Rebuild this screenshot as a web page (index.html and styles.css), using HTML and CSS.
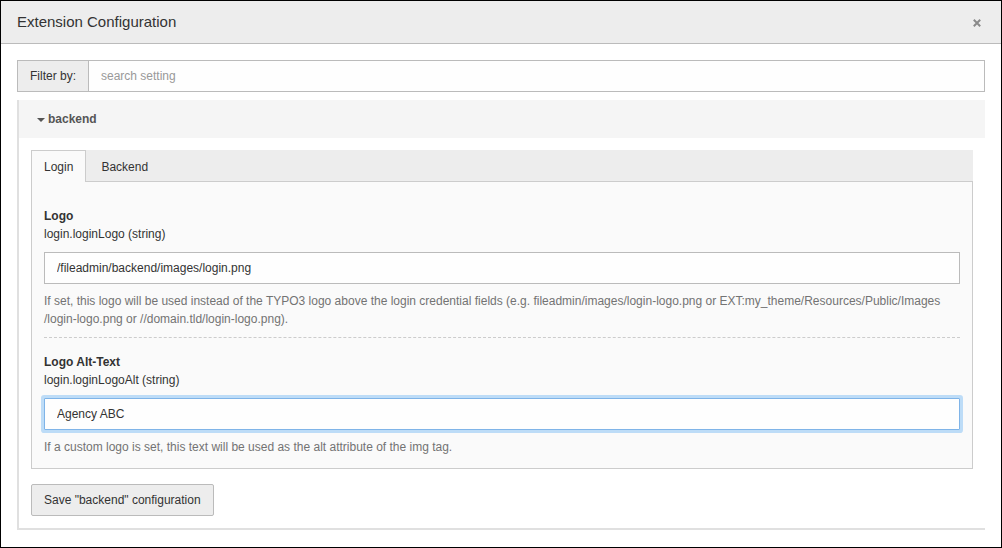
FILE: index.html
```html
<!DOCTYPE html>
<html>
<head>
<meta charset="utf-8">
<link rel="stylesheet" href="styles.css">
</head>
<body>
<div class="modal">
  <div class="modal-header">
    <h4 class="modal-title">Extension Configuration</h4>
    <span class="close" title="Close"><svg width="8" height="8" viewBox="0 0 8 8"><path d="M0.8 0.8 L7.2 7.2 M7.2 0.8 L0.8 7.2" stroke="#8a8a8a" stroke-width="2" fill="none"/></svg></span>
  </div>
  <div class="modal-body">
    <div class="filter-group">
      <span class="addon">Filter by:</span>
      <input class="filter-input" type="text" placeholder="search setting">
    </div>
    <div class="panel">
      <div class="panel-heading"><span class="caret"></span>backend</div>
      <div class="panel-body">
        <ul class="tabs">
          <li class="tab active">Login</li>
          <li class="tab">Backend</li>
        </ul>
        <div class="tab-content">
          <div class="field first">
            <div class="label">Logo</div>
            <div class="key">login.loginLogo (string)</div>
            <input class="text-input" type="text" value="/fileadmin/backend/images/login.png">
            <div class="help">If set, this logo will be used instead of the TYPO3 logo above the login credential fields (e.g. fileadmin/images/login-logo.png or EXT:my_theme/Resources/Public/Images /login-logo.png or //domain.tld/login-logo.png).</div>
          </div>
          <div class="field last">
            <div class="label">Logo Alt-Text</div>
            <div class="key">login.loginLogoAlt (string)</div>
            <input class="text-input focus" type="text" value="Agency ABC">
            <div class="help">If a custom logo is set, this text will be used as the alt attribute of the img tag.</div>
          </div>
        </div>
        <button class="btn">Save "backend" configuration</button>
      </div>
    </div>
  </div>
</div>
</body>
</html>
```

FILE: styles.css
```css
* { box-sizing: border-box; }
html, body { margin: 0; padding: 0; }
body {
  font-family: "Liberation Sans", Arial, sans-serif;
  font-size: 12px;
  color: #333;
  background: #fff;
}
.modal {
  width: 1002px;
  height: 548px;
  border: 1px solid #000;
  background: #fff;
  overflow: hidden;
}
.modal-header {
  height: 43px;
  background: #ededed;
  border-bottom: 1px solid #bbb;
  display: flex;
  align-items: center;
  justify-content: space-between;
  padding: 0 16px;
}
.modal-title {
  margin: 0;
  font-size: 15px;
  font-weight: normal;
  color: #333;
  padding-bottom: 1px;
}
.close {
  display: flex;
  width: 8px;
  height: 8px;
  margin-right: 4px;
  margin-top: 1px;
}
.modal-body {
  padding: 16px 16px 0 16px;
}
.filter-group {
  display: flex;
  height: 32px;
}
.addon {
  display: flex;
  align-items: center;
  padding: 0 12px;
  background: #ededed;
  border: 1px solid #bbb;
  color: #333;
  width: 72px;
}
.filter-input {
  flex: 1;
  height: 32px;
  border: 1px solid #bbb;
  border-left: 0;
  padding: 0 12px;
  font-family: inherit;
  font-size: 12px;
  color: #333;
  background: #fefefe;
  outline: none;
}
.filter-input::placeholder { color: #999; }
.panel {
  margin-top: 8px;
  border-left: 2px solid #e0e0e0;
  border-bottom: 2px solid #e0e0e0;
}
.panel-heading {
  height: 38px;
  background: #f5f5f5;
  display: flex;
  align-items: center;
  padding-left: 18px;
  font-weight: bold;
  color: #555;
}
.caret {
  display: inline-block;
  width: 0;
  height: 0;
  border-left: 4px solid transparent;
  border-right: 4px solid transparent;
  border-top: 4px solid #555;
  margin-right: 3px;
  margin-top: 1px;
}
.panel-body {
  padding: 12px 12px 12px 12px;
}
.tabs {
  list-style: none;
  margin: 0;
  padding: 0;
  display: flex;
  background: #ededed;
  height: 32px;
  border-bottom: 1px solid #ccc;
}
.tab {
  padding: 0 14px;
  display: flex;
  align-items: center;
  color: #333;
  border: 1px solid transparent;
  border-bottom: 0;
  height: 32px;
}
.tab.active {
  background: #fafafa;
  border-color: #ccc;
  padding: 0 12px;
  height: 32px;
}
.tab-content {
  background: #fafafa;
  border: 1px solid #ccc;
  border-top: 0;
  padding: 12px 12px 12px 12px;
}
.field {
  padding-top: 13px;
  padding-bottom: 9px;
  border-bottom: 1px dashed #ccc;
}
.field.last {
  padding-top: 15px;
  padding-bottom: 0;
  border-bottom: 0;
}
.label {
  font-weight: bold;
  line-height: 18px;
  color: #333;
}
.key {
  line-height: 18px;
  color: #333;
}
.text-input {
  display: block;
  width: 100%;
  height: 32px;
  margin-top: 9px;
  border: 1px solid #bbb;
  padding: 0 12px;
  font-family: inherit;
  font-size: 12px;
  color: #333;
  background: #fefefe;
  outline: none;
}
.text-input.focus {
  border-color: #7fb4e8;
  box-shadow: 0 0 0 3px #bddcf7;
  border-radius: 1px;
}
.help {
  margin-top: 8px;
  line-height: 18px;
  color: #737373;
}
.btn {
  margin-top: 15px;
  height: 32px;
  padding: 0 12px;
  background: #ededed;
  border: 1px solid #bbb;
  border-radius: 2px;
  font-family: inherit;
  font-size: 12px;
  color: #333;
}
```
